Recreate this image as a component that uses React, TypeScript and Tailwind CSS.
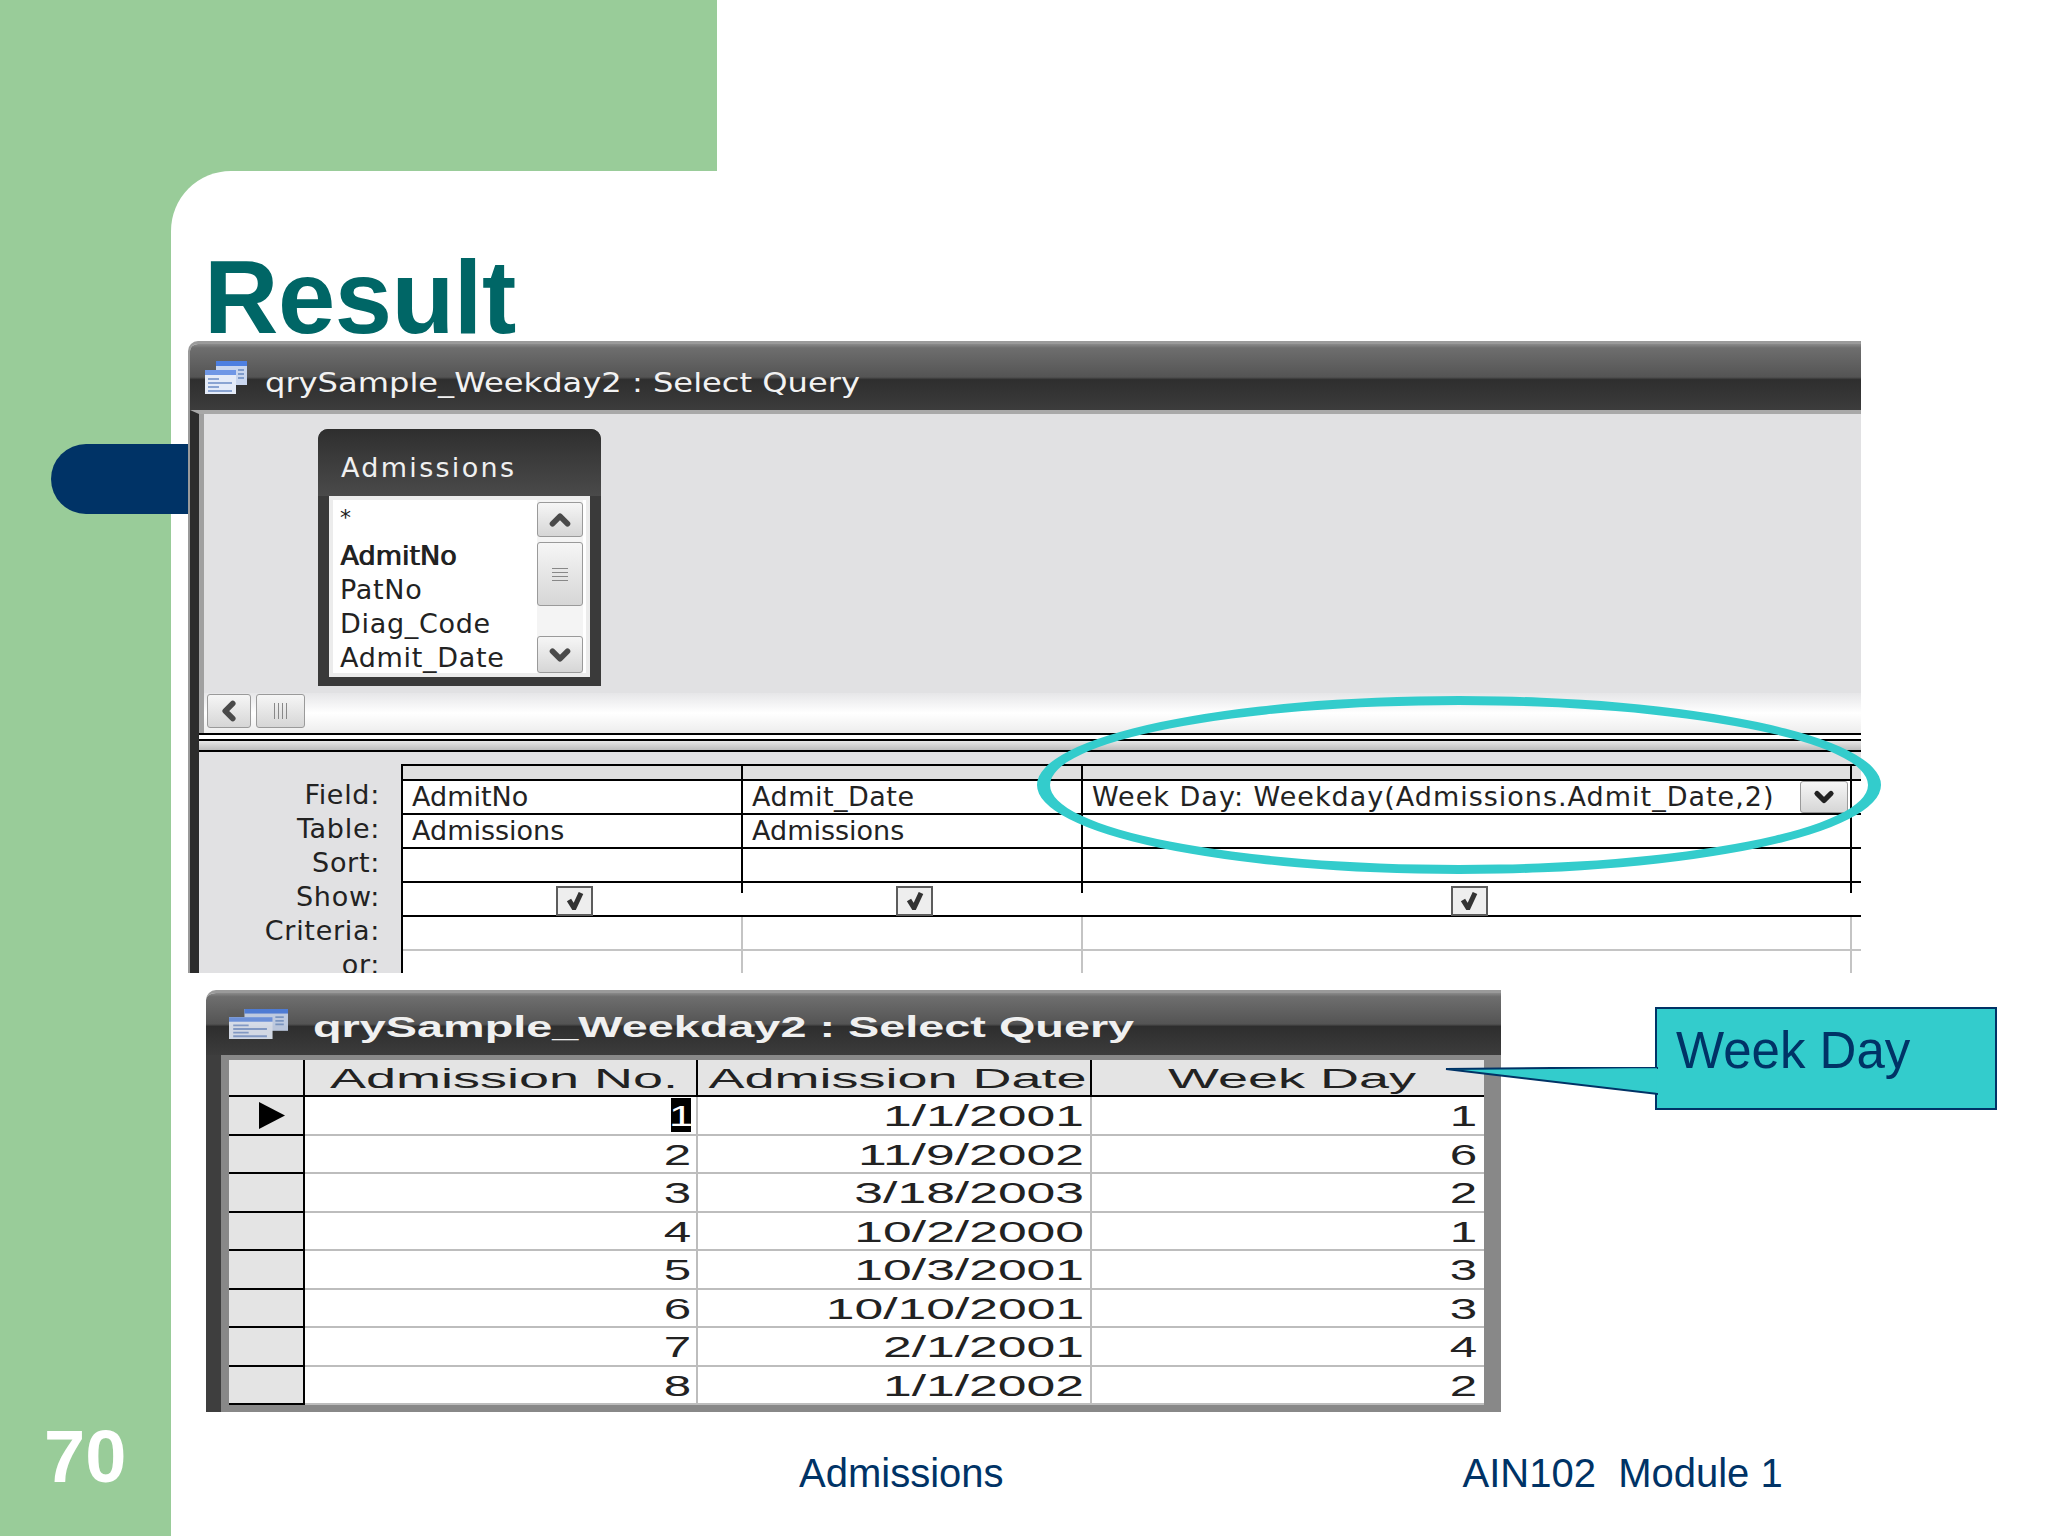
import { ChevronDown, ChevronLeft, ChevronUp } from 'lucide-react';

const fieldRows = ['PatNo', 'Diag_Code', 'Admit_Date'];
const labels = ['Field:', 'Table:', 'Sort:', 'Show:', 'Criteria:', 'or:'];
const records = [
  ['1', '1/1/2001', '1'],
  ['2', '11/9/2002', '6'],
  ['3', '3/18/2003', '2'],
  ['4', '10/2/2000', '1'],
  ['5', '10/3/2001', '3'],
  ['6', '10/10/2001', '3'],
  ['7', '2/1/2001', '4'],
  ['8', '1/1/2002', '2'],
];

const titleBar = 'bg-[linear-gradient(180deg,#8a8a8a_0%,#6e6e6e_6%,#545454_50%,#2e2e2e_54%,#3c3c3c_100%)]';
const button = 'flex items-center justify-center rounded-[3px] border border-[#9a9a9a] bg-gradient-to-b from-[#f6f6f6] to-[#d6d6d6]';

function WindowIcon({ className }: { className: string }) {
  return (
    <svg className={className} viewBox="0 0 42 33" preserveAspectRatio="none">
      <rect x="11" y="0" width="31" height="24" fill="#c9d6ee" />
      <rect x="11" y="0" width="31" height="5" fill="#4d7fe0" />
      <path d="M33 9h6M33 13h6M33 17h6" stroke="#7f9ccb" strokeWidth="2" />
      <rect x="0" y="9" width="31" height="24" fill="#e4ebf8" />
      <rect x="0" y="9" width="31" height="5" fill="#6f97e6" />
      <path d="M3 18h11M3 22h24M3 26h11M3 30h24" stroke="#8aa4d2" strokeWidth="2" />
    </svg>
  );
}

function Check() {
  return (
    <svg className="h-[18px] w-[18px]" viewBox="0 0 18 18">
      <path d="M3 8l5 8L15 1" fill="none" stroke="#333" strokeWidth="5" />
    </svg>
  );
}

function ShowCell({ tick }: { tick?: boolean }) {
  return (
    <div className="relative flex items-end justify-center border-b-2 border-black pl-[3px]">
      <div className="-mb-[1px] flex h-[30px] w-[37px] items-center justify-center border-2 border-[#5c5c5c] bg-[#eeeeee]">
        <Check />
      </div>
      {tick && <span className="absolute right-0 top-0 h-[10px] w-[2px] bg-black" />}
    </div>
  );
}

function QueryGrid() {
  const cell = 'flex items-center border-b-2 border-r-2 border-black pl-[9px]';
  const thin = 'border-b-2 border-r-2 border-[#c4c4c4]';
  return (
    <div className="grid flex-1 grid-cols-[340px_340px_769px_1fr] grid-rows-[15px_34px_34px_34px_34px_34px_34px] border-l-2 border-t-2 border-black bg-white">
      <div className="border-b-2 border-r-2 border-black bg-[#e0e0e0]" />
      <div className="border-b-2 border-r-2 border-black bg-[#e0e0e0]" />
      <div className="border-b-2 border-r-2 border-black bg-[#e0e0e0]" />
      <div className="border-b-2 border-black bg-[#e0e0e0]" />

      <div className={cell}>AdmitNo</div>
      <div className={`${cell} tracking-[0.5px]`}>Admit_Date</div>
      <div className={`${cell} justify-between pr-[2px]`}>
        <span className="tracking-[1px]">Week Day: Weekday(Admissions.Admit_Date,2)</span>
        <span className={`${button} h-[32px] w-[48px]`}>
          <ChevronDown className="h-[28px] w-[28px] text-[#222]" strokeWidth={4.5} />
        </span>
      </div>
      <div className="border-b-2 border-black" />

      <div className={cell}>Admissions</div>
      <div className={cell}>Admissions</div>
      <div className={cell} />
      <div className="border-b-2 border-black" />

      <div className={cell} />
      <div className={cell} />
      <div className={cell} />
      <div className="border-b-2 border-black" />

      <ShowCell tick />
      <ShowCell tick />
      <ShowCell tick />
      <div className="border-b-2 border-black" />

      <div className={thin} />
      <div className={thin} />
      <div className={thin} />
      <div className="border-b-2 border-[#c4c4c4]" />

      <div className="border-r-2 border-[#c4c4c4]" />
      <div className="border-r-2 border-[#c4c4c4]" />
      <div className="border-r-2 border-[#c4c4c4]" />
      <div />
    </div>
  );
}

function FieldList() {
  return (
    <div className="flex h-[257px] w-[283px] flex-col rounded-t-[10px] bg-[#3a3a3a]">
      <div className="flex h-[67px] items-center rounded-t-[10px] bg-[linear-gradient(180deg,#2e2e2e_0%,#3a3a3a_40%,#4a4a4a_100%)] pl-[23px] pt-[10px] leading-none tracking-[2.3px] text-[#f0f0f0]">
        Admissions
      </div>
      <div className="mx-[11px] flex h-[181px] border-[4px] border-[#ececec] bg-white">
        <div className="flex-1 pl-[7px] tracking-[0.7px]">
          <div className="h-[39px] pb-[9px] text-[22px] leading-[36px]">*</div>
          <div className="flex h-[34px] items-center tracking-normal [text-shadow:1px_0_0_#222]">AdmitNo</div>
          {fieldRows.map((row) => (
            <div key={row} className="flex h-[34px] items-center">{row}</div>
          ))}
        </div>
        <div className="mr-[3px] flex w-[46px] flex-col bg-[#f4f4f4] pt-[2px]">
          <div className={`${button} h-[35px]`}>
            <ChevronUp className="h-[30px] w-[30px] text-[#4a4a4a]" strokeWidth={4.5} />
          </div>
          <div className={`${button} mt-[5px] h-[64px] flex-col gap-[3px]`}>
            <span className="h-px w-[16px] bg-[#888]" />
            <span className="h-px w-[16px] bg-[#888]" />
            <span className="h-px w-[16px] bg-[#888]" />
            <span className="h-px w-[16px] bg-[#888]" />
          </div>
          <div className="flex-1" />
          <div className={`${button} h-[37px]`}>
            <ChevronDown className="h-[30px] w-[30px] text-[#4a4a4a]" strokeWidth={4.5} />
          </div>
        </div>
      </div>
    </div>
  );
}

function DesignWindow() {
  return (
    <div className="relative ml-[17px] h-[632px] w-[1673px]">
      <div className="flex h-full flex-col overflow-hidden rounded-tl-[10px] border-l-2 border-t-[3px] border-[#9a9a9a] font-['DejaVu_Sans',sans-serif] text-[27px] text-[#222]">
        <div className={`flex h-[66px] shrink-0 items-center gap-[18px] pl-[15px] ${titleBar}`}>
          <WindowIcon className="h-[33px] w-[42px]" />
          <span className="mt-[10px] inline-block origin-left scale-x-[1.19] whitespace-nowrap leading-none text-[#f2f2f2]">
            qrySample_Weekday2 : Select Query
          </span>
        </div>
        <div className="flex flex-1 flex-col border-l-[9px] border-t-[4px] border-l-[#2c2c2c] border-t-[#a8a8a8]">
          <div className="h-[279px] border-l-[5px] border-[#a0a0a0] bg-[#e1e1e3] pl-[114px] pt-[15px]">
            <FieldList />
          </div>
          <div className="flex h-[40px] items-start gap-[5px] border-l-[5px] border-[#a0a0a0] bg-gradient-to-b from-[#e6e6e8] via-white to-[#ededed] pl-[3px] pt-[1px]">
            <div className={`${button} h-[34px] w-[44px]`}>
              <ChevronLeft className="h-[30px] w-[30px] text-[#4a4a4a]" strokeWidth={4.5} />
            </div>
            <div className={`${button} h-[34px] w-[49px] gap-[3px]`}>
              <span className="h-[16px] w-px bg-[#888]" />
              <span className="h-[16px] w-px bg-[#888]" />
              <span className="h-[16px] w-px bg-[#888]" />
              <span className="h-[16px] w-px bg-[#888]" />
            </div>
          </div>
          <div className="h-[19px] border-y-2 border-black">
            <div className="h-[4px] bg-white" />
            <div className="h-[2px] bg-black" />
            <div className="h-[9px] bg-gradient-to-b from-[#e8e8e8] to-[#bdbdbd]" />
          </div>
          <div className="flex flex-1 bg-[#e1e1e3] pt-[12px]">
            <div className="w-[202px] pr-[21px] pt-[14px] text-right tracking-[0.7px]">
              {labels.map((label) => (
                <div key={label} className="flex h-[34px] items-center justify-end">{label}</div>
              ))}
            </div>
            <QueryGrid />
          </div>
        </div>
      </div>
      <div className="absolute left-[849px] top-[355px] h-[178px] w-[844px] rounded-[50%] border-x-[13px] border-y-[9px] border-[#33cccc]" />
    </div>
  );
}

function ResultWindow() {
  return (
    <div className="ml-[35px] flex h-[422px] w-[1295px] flex-col overflow-hidden rounded-tl-[10px] border-t-[3px] border-[#9a9a9a]">
      <div className={`flex h-[62px] shrink-0 items-center gap-[25px] pl-[23px] ${titleBar}`}>
        <WindowIcon className="h-[30px] w-[59px] opacity-90" />
        <span className="mt-[6px] inline-block origin-left scale-x-[1.56] whitespace-nowrap font-['Liberation_Sans',sans-serif] text-[30px] font-bold leading-none text-[#f0f0f0]">
          qrySample_Weekday2 : Select Query
        </span>
      </div>
      <div className="flex flex-1 flex-col bg-[#888] pb-[6px] pl-[23px] pr-[17px] pt-[5px] text-[#222] [box-shadow:inset_15px_0_0_#3e3e3e]">
        <div className="grid h-[37px] grid-cols-[76px_393px_394px_1fr] border-b-2 border-black bg-[#e4e4e4] text-[27px] leading-none">
          <div className="border-r-2 border-black" />
          {['Admission No.', 'Admission Date', 'Week Day'].map((head, i) => (
            <div key={head} className={`flex items-center justify-center pl-[8px] pt-[3px] ${i < 2 ? 'border-r-2 border-black' : ''}`}>
              <span className="inline-block scale-x-[2] whitespace-nowrap">{head}</span>
            </div>
          ))}
        </div>
        {records.map(([no, date, day], i) => (
          <div key={no} className="grid h-[38.5px] grid-cols-[76px_393px_394px_1fr] text-[29px] leading-none">
            <div className="flex items-center justify-center border-b-2 border-r-2 border-black bg-[#e4e4e4] pl-[12px]">
              {i === 0 && (
                <svg className="h-[27px] w-[26px]" viewBox="0 0 26 27">
                  <path d="M0 0l26 13.5L0 27z" fill="#000" />
                </svg>
              )}
            </div>
            <div className="flex items-center justify-end border-b-2 border-r-2 border-[#bdbdbd] bg-white pr-[5px] pt-[3px]">
              {i === 0 ? (
                <span className="-mt-[3px] flex h-[34px] w-[20px] items-center justify-center bg-black pt-[3px] text-white">
                  <span className="inline-block scale-x-[1.5]">{no}</span>
                </span>
              ) : (
                <span className="inline-block origin-right scale-x-[1.7]">{no}</span>
              )}
            </div>
            <div className="flex items-center justify-end border-b-2 border-r-2 border-[#bdbdbd] bg-white pr-[6px] pt-[3px]">
              <span className="inline-block origin-right scale-x-[1.78] whitespace-nowrap">{date}</span>
            </div>
            <div className="flex items-center justify-end border-b-2 border-[#bdbdbd] bg-white pr-[7px] pt-[3px]">
              <span className="inline-block origin-right scale-x-[1.7]">{day}</span>
            </div>
          </div>
        ))}
      </div>
    </div>
  );
}

function Callout() {
  return (
    <div className="relative ml-[154px] mt-[17px] flex h-[103px] w-[342px] items-start border-2 border-[#003366] bg-[#33cccc] pl-[19px] pt-[14px] text-[51px] leading-[56px] text-[#003366]">
      Week Day
      <svg className="absolute -left-[213px] top-[58px] h-[30px] w-[214px]" viewBox="0 0 214 30">
        <path d="M214 0L2 2L214 27z" fill="#33cccc" stroke="#003366" strokeWidth="2" />
        <path d="M214 2V26" stroke="#33cccc" strokeWidth="3" />
      </svg>
    </div>
  );
}

export default function App() {
  return (
    <div className="h-[1536px] w-[2048px] overflow-hidden bg-white font-['Liberation_Sans',sans-serif]">
      <div className="h-[171px] w-[717px] bg-[#99cc99]" />
      <div className="flex h-[1365px] bg-[#99cc99]">
        <div className="flex w-[171px] shrink-0 flex-col">
          <div className="relative z-10 ml-[51px] mt-[273px] h-[70px] w-[137px] rounded-l-[35px] bg-[#003366]" />
          <div className="mt-auto pb-[42px] pl-[44px] text-[74px] font-bold leading-[74px] text-white">70</div>
        </div>
        <div className="flex-1 rounded-tl-[60px] bg-white">
          <div className="h-[170px] pl-[33px] pt-[75px] text-[103px] font-bold leading-[103px] tracking-[-0.5px] text-[#006666]">
            Result
          </div>
          <DesignWindow />
          <div className="mt-[17px] flex">
            <ResultWindow />
            <Callout />
          </div>
          <div className="ml-[628px] mt-[41px] flex gap-[459px] whitespace-pre text-[40px] leading-[40px] text-[#003366]">
            <span>Admissions</span>
            <span>AIN102  Module 1</span>
          </div>
        </div>
      </div>
    </div>
  );
}
